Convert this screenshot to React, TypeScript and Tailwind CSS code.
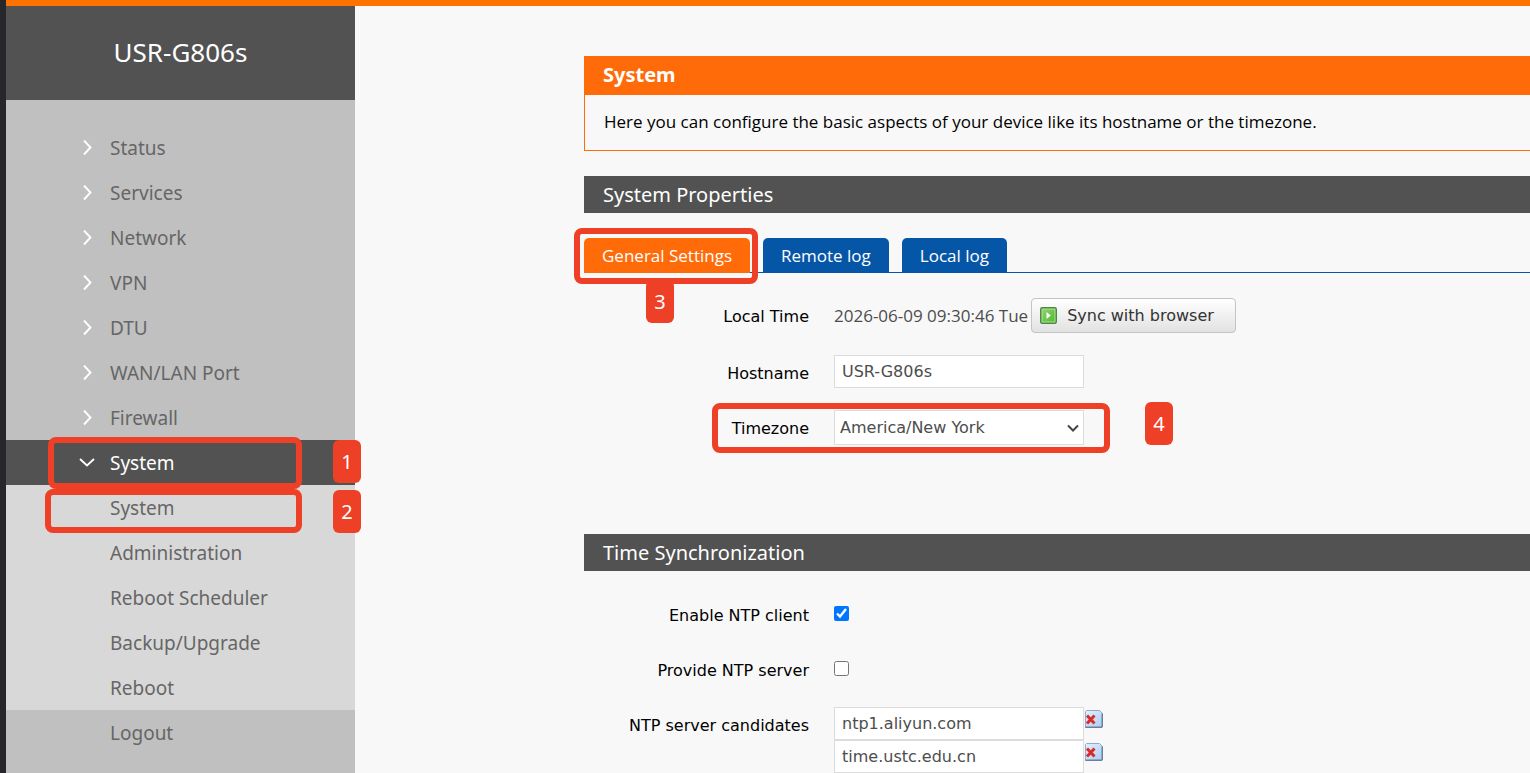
import React from 'react';

const menu = ['Status', 'Services', 'Network', 'VPN', 'DTU', 'WAN/LAN Port', 'Firewall'];
const subMenu = ['System', 'Administration', 'Reboot Scheduler', 'Backup/Upgrade', 'Reboot'];
const ntpServers = ['ntp1.aliyun.com', 'time.ustc.edu.cn'];

const Outline: React.FC<{ className: string }> = ({ className }) => (
  <span className={`pointer-events-none absolute z-10 rounded-lg border-6 border-[#ee4026] ${className}`} />
);

const Step: React.FC<{ n: number; className: string }> = ({ n, className }) => (
  <span
    className={`absolute z-10 flex h-[43px] w-7 items-center justify-center rounded-md bg-[#ee4026] text-xl text-white ${className}`}
  >
    {n}
  </span>
);

const Chevron: React.FC<{ open?: boolean }> = ({ open }) => (
  <svg width="16" height="16" viewBox="0 0 16 16" fill="none" stroke="white" strokeWidth="1.9">
    <path d={open ? 'M1 4 L8 10.5 L15 4' : 'M5 0.5 L11.5 7.5 L5 14.5'} />
  </svg>
);

const PlayIcon = () => (
  <svg width="17" height="17" viewBox="0 0 17 17">
    <defs>
      <linearGradient id="play" x1="0" y1="0" x2="1" y2="1">
        <stop offset="0" stopColor="#8fce72" />
        <stop offset="1" stopColor="#4fc02c" />
      </linearGradient>
    </defs>
    <rect x="0.75" y="0.75" width="15.5" height="15.5" rx="1.5" fill="#b4e09f" stroke="#4c8b3f" strokeWidth="1.5" />
    <rect x="2.5" y="2.5" width="12" height="12" fill="url(#play)" />
    <path d="M6.5 5 L10.8 8.5 L6.5 12 Z" fill="white" />
  </svg>
);

const RemoveIcon = () => (
  <svg width="18" height="18" viewBox="0 0 18 18">
    <defs>
      <linearGradient id="page" x1="0" y1="0" x2="1" y2="1">
        <stop offset="0" stopColor="#e3f1fd" />
        <stop offset="1" stopColor="#a9cdf2" />
      </linearGradient>
    </defs>
    <path d="M1.5 0.5 H14.5 L17.5 3.5 V16.5 L16.5 17.5 H0.5 V1.5 Z" fill="url(#page)" stroke="#93a9c6" />
    <path d="M17.25 3.5 V16.5 L16.5 17.25 H0.5" fill="none" stroke="#6d7f9f" strokeWidth="1.5" />
    <path d="M2 5.5 L9.5 13.5 M9.5 5.5 L2 13.5" stroke="#dc2a2a" strokeWidth="3" />
  </svg>
);

const SectionTitle: React.FC<{ children: React.ReactNode }> = ({ children }) => (
  <h3 className="flex h-[37px] items-center bg-[#525252] pl-[19px] text-xl text-white">{children}</h3>
);

interface RowProps {
  id: string;
  label: string;
  children: React.ReactNode;
}

const Row: React.FC<RowProps> = ({ id, label, children }) => (
  <div className="relative flex items-start gap-[25px] font-['DejaVu_Sans',Verdana,sans-serif] text-base">
    <label htmlFor={id} className="w-[225px] pt-[7px] text-right leading-6 text-black">
      {label}
    </label>
    {children}
  </div>
);

const inputClass = 'h-[33px] w-[250px] border border-[#dcdcdc] bg-white px-[7px] text-[#4d4d4d]';

const Sidebar = () => (
  <aside className="w-[349px] shrink-0 bg-[#c0c0c0]">
    <h1 className="flex h-[94px] items-center justify-center bg-[#525252] pb-0.5 text-[26px] text-white">USR-G806s</h1>
    <nav className="pt-[25px] text-[19px] text-[#666]">
      {menu.map((item) => (
        <a key={item} href="#" className="flex h-[45px] items-center gap-[15px] pl-[73px]">
          <Chevron />
          <span className="pt-0.5">{item}</span>
        </a>
      ))}
      <div className="relative">
        <a href="#" className="flex h-[45px] items-center gap-[15px] bg-[#525252] pl-[73px] text-white">
          <Chevron open />
          <span className="pt-0.5">System</span>
        </a>
        <Outline className="-top-[3px] left-[42px] h-[52px] w-[254px]" />
        <Step n={1} className="top-0 left-[327px]" />
      </div>
      <div className="relative bg-[#d8d8d8]">
        {subMenu.map((item) => (
          <a key={item} href="#" className="flex h-[45px] items-center pt-0.5 pl-[104px]">
            {item}
          </a>
        ))}
        <Outline className="top-1 left-[39px] h-11 w-[257px]" />
        <Step n={2} className="top-[5px] left-[327px]" />
      </div>
      <a href="#" className="flex h-[45px] items-center pt-0.5 pl-[104px]">
        Logout
      </a>
    </nav>
  </aside>
);

const tabClass = "rounded-t-[5px] px-[18px] font-['Open_Sans','Segoe_UI',sans-serif]";

const App = () => {
  return (
    <div className="flex min-h-screen border-l-6 border-[#26272b] bg-[#f8f8f8] font-['Noto_Sans','Segoe_UI',sans-serif]">
      <div className="flex grow flex-col border-t-6 border-[#ff7200]">
        <div className="flex grow">
          <Sidebar />
          <main className="grow pt-[50px] pl-[229px]">
            <section>
              <h2 className="flex h-[39px] items-center bg-[#ff6b08] pb-0.5 pl-[19px] text-xl font-bold text-white">
                System
              </h2>
              <p className="flex h-14 items-center border-b border-l border-[#ff6b08] pb-0.5 pl-[19px] font-['Open_Sans','Segoe_UI',sans-serif] text-[17px] text-black">
                Here you can configure the basic aspects of your device like its hostname or the timezone.
              </p>
            </section>

            <section className="mt-[25px]">
              <SectionTitle>System Properties</SectionTitle>
              <div className="relative mt-[25px] flex h-[35px] gap-[13px] border-b border-[#0656a8] text-[17px] text-white">
                <button className={`-mb-px bg-[#ff6b08] ${tabClass}`}>General Settings</button>
                <button className={`-mb-px bg-[#0656a8] ${tabClass}`}>Remote log</button>
                <button className={`-mb-px bg-[#0656a8] ${tabClass}`}>Local log</button>
                <Outline className="-top-[10px] -left-[10px] h-14 w-[184px]" />
                <Step n={3} className="top-[42px] left-[62px]" />
              </div>

              <div className="flex flex-col gap-[22px] pt-[25px]">
                <Row id="time" label="Local Time">
                  <div className="flex items-center gap-[3px]">
                    <output id="time" className="font-['Open_Sans','Segoe_UI',sans-serif] text-[17px] text-[#4d4d4d]">
                      2026-06-09 09:30:46 Tue
                    </output>
                    <button className="flex h-[35px] w-[205px] items-center gap-2.5 rounded border border-[#c4c4c4] bg-linear-to-b from-white to-[#e2e2e2] pl-2 text-[#333]">
                      <PlayIcon />
                      Sync with browser
                    </button>
                  </div>
                </Row>
                <Row id="hostname" label="Hostname">
                  <input id="hostname" defaultValue="USR-G806s" className={inputClass} />
                </Row>
                <Row id="timezone" label="Timezone">
                  <div className="relative">
                    <select
                      id="timezone"
                      className="h-[35px] w-[250px] appearance-none border border-[#dcdcdc] bg-white px-[5px] text-[#4d4d4d]"
                    >
                      <option>America/New York</option>
                    </select>
                    <svg
                      className="pointer-events-none absolute top-[14px] right-1"
                      width="14"
                      height="9"
                      viewBox="0 0 14 9"
                      fill="none"
                      stroke="#444"
                      strokeWidth="2"
                    >
                      <path d="M2 1.5 L7 6.5 L12 1.5" />
                    </svg>
                  </div>
                  <Outline className="-top-[7px] left-32 h-[50px] w-[398px]" />
                  <Step n={4} className="-top-2 left-[561px] font-['Noto_Sans',sans-serif]" />
                </Row>
              </div>
            </section>

            <section className="mt-[89px]">
              <SectionTitle>Time Synchronization</SectionTitle>
              <div className="flex flex-col gap-[22px] pt-[26px]">
                <Row id="client" label="Enable NTP client">
                  <div className="flex h-[33px] items-center">
                    <input id="client" type="checkbox" defaultChecked className="size-[15px] accent-[#0075ff]" />
                  </div>
                </Row>
                <Row id="server" label="Provide NTP server">
                  <div className="flex h-[33px] items-center">
                    <input id="server" type="checkbox" className="size-[15px]" />
                  </div>
                </Row>
                <Row id="ntp0" label="NTP server candidates">
                  <div>
                    {ntpServers.map((server, i) => (
                      <div key={server} className="flex gap-px">
                        <input id={`ntp${i}`} aria-label={server} defaultValue={server} className={inputClass} />
                        <button aria-label="Remove" className="self-start pt-[3px]">
                          <RemoveIcon />
                        </button>
                      </div>
                    ))}
                  </div>
                </Row>
              </div>
            </section>
          </main>
        </div>
      </div>
    </div>
  );
};

export default App;
